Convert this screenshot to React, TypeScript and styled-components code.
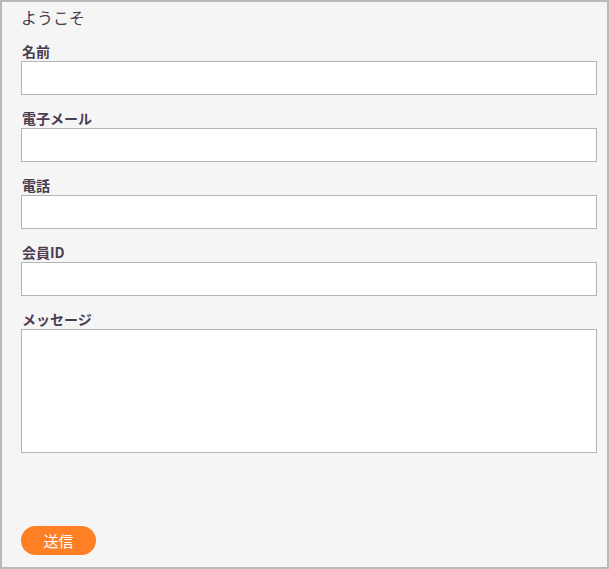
import styled, { createGlobalStyle } from 'styled-components';

const GlobalStyle = createGlobalStyle`
  html, body {
    margin: 0;
    padding: 0;
  }
  body {
    font-family: "Noto Sans CJK JP", "DejaVu Sans", sans-serif;
  }
`;

const Frame = styled.form`
  box-sizing: border-box;
  width: 609px;
  height: 569px;
  border: 2px solid #b9b9b9;
  background: #f5f5f5;
  padding: 5px 11px 0 19px;
  display: flex;
  flex-direction: column;
  color: #4a3d50;
`;

const Title = styled.h1`
  margin: 0;
  font-size: 16px;
  font-weight: normal;
  line-height: 20px;
`;

const Fields = styled.div`
  display: flex;
  flex-direction: column;
  gap: 16px;
  margin-top: 17px;
`;

const Field = styled.label`
  display: flex;
  flex-direction: column;
`;

const Caption = styled.span`
  font-size: 14px;
  font-weight: bold;
  line-height: 14px;
  margin-bottom: 3px;
  padding-left: 1px;
`;

const Input = styled.input`
  box-sizing: border-box;
  width: 576px;
  height: 34px;
  margin: 0;
  border: 1px solid #b5b5b5;
  background: #fff;
  padding: 0 6px;
  font: inherit;
  font-size: 13px;
  outline: none;
`;

const Area = styled.textarea`
  box-sizing: border-box;
  width: 576px;
  height: 124px;
  margin: 0;
  border: 1px solid #b5b5b5;
  background: #fff;
  padding: 6px;
  font: inherit;
  font-size: 13px;
  resize: none;
  outline: none;
`;

const Submit = styled.button`
  align-self: flex-start;
  margin-top: 73px;
  width: 75px;
  height: 29px;
  border: none;
  border-radius: 15px;
  background: #ff7f24;
  color: #fff;
  font: inherit;
  font-size: 15px;
  line-height: 29px;
  padding: 0;
  cursor: pointer;
`;

const fields = ['名前', '電子メール', '電話', '会員ID'];

export default function App() {
  return (
    <>
      <GlobalStyle />
      <Frame onSubmit={(e) => e.preventDefault()}>
        <Title>ようこそ</Title>
        <Fields>
          {fields.map((f) => (
            <Field key={f}>
              <Caption>{f}</Caption>
              <Input type="text" />
            </Field>
          ))}
          <Field>
            <Caption>メッセージ</Caption>
            <Area />
          </Field>
        </Fields>
        <Submit type="submit">送信</Submit>
      </Frame>
    </>
  );
}
